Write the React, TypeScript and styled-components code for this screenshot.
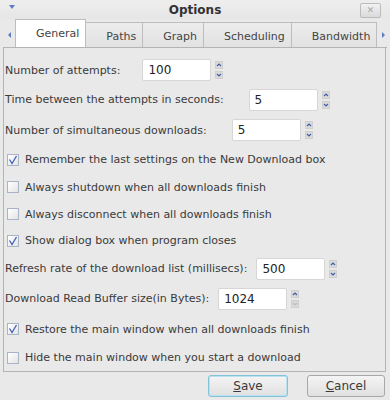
import React from 'react';
import styled, { createGlobalStyle } from 'styled-components';

const GlobalStyle = createGlobalStyle`
  html, body {
    margin: 0;
    padding: 0;
    background: #e9e9e9;
  }
  body {
    font-family: 'DejaVu Sans', 'Liberation Sans', sans-serif;
    font-size: 11px;
    color: #3a3a3a;
  }
`;

const Window = styled.div`
  width: 390px;
  height: 400px;
  display: flex;
  flex-direction: column;
  background: #e9e9e9;
  overflow: hidden;
`;

const TitleBar = styled.div`
  height: 19px;
  display: grid;
  grid-template-columns: 1fr auto 1fr;
  align-items: center;
  background: linear-gradient(#eeeeee, #e6e6e6);
`;

const MenuArrow = styled.div`
  justify-self: start;
  margin-left: 9px;
  margin-top: -5px;
  width: 0;
  height: 0;
  border-left: 3px solid transparent;
  border-right: 3px solid transparent;
  border-top: 4px solid #5a7dc0;
`;

const Title = styled.div`
  font-weight: bold;
  font-size: 12px;
  color: #333;
`;

const CloseButton = styled.div`
  justify-self: end;
  margin-right: 9px;
  margin-top: 1px;
  width: 19px;
  height: 13px;
  border: 1px solid #bcbcbc;
  border-radius: 2px;
  background: linear-gradient(#f2f2f2, #dadada);
  display: flex;
  align-items: center;
  justify-content: center;
  color: #a8a8a8;
  font-size: 9px;
  line-height: 1;
`;

const TabBar = styled.div`
  height: 28px;
  display: flex;
  align-items: flex-end;
  border-bottom: 1px solid #b4b4b4;
  margin: 0 3px;
`;

const ScrollArrow = styled.div<{ $dir: 'left' | 'right' }>`
  width: 12px;
  flex-shrink: 0;
  align-self: center;
  margin-top: 3px;
  display: flex;
  justify-content: center;
  &::before {
    content: '';
    width: 0;
    height: 0;
    border-top: 3px solid transparent;
    border-bottom: 3px solid transparent;
    ${({ $dir }) =>
      $dir === 'left' ? 'border-right: 3px solid #5a7dc0;' : 'border-left: 3px solid #5a7dc0;'}
  }
`;

const Tab = styled.div<{ $active?: boolean }>`
  flex-shrink: 0;
  height: ${({ $active }) => ($active ? '28px' : '25px')};
  box-sizing: border-box;
  display: flex;
  align-items: center;
  padding: ${({ $active }) => ($active ? '0 6px 0 20px' : '2px 6px 0 20px')};
  background: ${({ $active }) => ($active ? '#ffffff' : 'linear-gradient(#ececec, #e2e2e2)')};
  border: 1px solid #bdbdbd;
  border-bottom: none;
  border-left: ${({ $active }) => ($active ? '1px solid #bdbdbd' : 'none')};
  font-size: 11px;
  color: #444;
  white-space: nowrap;
`;

const Panel = styled.div`
  height: 324px;
  box-sizing: border-box;
  margin: 0 4px 0 3px;
  border: 1px solid #b4b4b4;
  border-top: none;
  padding: 8px 0 0 1px;
  display: flex;
  flex-direction: column;
`;

const Row = styled.div<{ $h: number }>`
  height: ${({ $h }) => $h}px;
  display: flex;
  align-items: center;
  white-space: nowrap;
`;

const Label = styled.span``;

const SpinField = styled.div<{ $gap: number }>`
  display: flex;
  align-items: center;
  gap: 4px;
  margin-left: ${({ $gap }) => $gap}px;
`;

const Input = styled.div`
  width: 69px;
  height: 22px;
  box-sizing: border-box;
  background: #ffffff;
  border: 1px solid #d6d6d6;
  border-radius: 2px;
  display: flex;
  align-items: center;
  padding-left: 5px;
  font-size: 12px;
  color: #222;
`;

const SpinButtons = styled.div`
  display: flex;
  flex-direction: column;
  gap: 2px;
`;

const SpinButton = styled.div<{ $disabled?: boolean }>`
  width: 8px;
  height: 8px;
  box-sizing: border-box;
  background: #dadada;
  border: 1px solid #cfcfcf;
  display: flex;
  align-items: center;
  justify-content: center;
  svg {
    display: block;
  }
  path {
    stroke: ${({ $disabled }) => ($disabled ? '#bdbdbd' : '#3d5fa8')};
  }
`;

const CheckRow = styled(Row)`
  padding-left: 2px;
  gap: 6px;
`;

const Box = styled.div`
  width: 12px;
  height: 12px;
  box-sizing: border-box;
  border: 1px solid #a9b4c4;
  background: linear-gradient(135deg, #ffffff, #e4e4e4);
  display: flex;
  align-items: center;
  justify-content: center;
`;

const ButtonRow = styled.div`
  display: flex;
  justify-content: flex-end;
  gap: 19px;
  padding: 3px 5px 0 0;
`;

const Button = styled.div<{ $focused?: boolean; $w: number }>`
  width: ${({ $w }) => $w}px;
  height: 22px;
  box-sizing: border-box;
  border: 1px solid ${({ $focused }) => ($focused ? '#7fc4d8' : '#a8a8a8')};
  box-shadow: ${({ $focused }) => ($focused ? 'inset 0 0 0 1px #b9e2ee' : 'none')};
  border-radius: 3px;
  background: linear-gradient(#f4f4f4, #e0e0e0);
  display: flex;
  align-items: center;
  justify-content: center;
  font-size: 12px;
  color: #3a3a3a;
  u {
    text-decoration: underline;
  }
`;

const Spin = ({ value, gap, downDisabled }: { value: string; gap: number; downDisabled?: boolean }) => (
  <SpinField $gap={gap}>
    <Input>{value}</Input>
    <SpinButtons>
      <SpinButton>
        <svg width="6" height="4" viewBox="0 0 6 4">
          <path d="M1 3 L3 1 L5 3" fill="none" strokeWidth="1.2" />
        </svg>
      </SpinButton>
      <SpinButton $disabled={downDisabled}>
        <svg width="6" height="4" viewBox="0 0 6 4">
          <path d="M1 1 L3 3 L5 1" fill="none" strokeWidth="1.2" />
        </svg>
      </SpinButton>
    </SpinButtons>
  </SpinField>
);

const Check = ({ checked, label, h }: { checked?: boolean; label: string; h: number }) => (
  <CheckRow $h={h}>
    <Box>
      {checked && (
        <svg width="10" height="10" viewBox="0 0 10 10">
          <path d="M1.5 4.5 L4 8.5 L8.5 1" fill="none" stroke="#3f62b8" strokeWidth="1.3" />
        </svg>
      )}
    </Box>
    <Label>{label}</Label>
  </CheckRow>
);

export default function App() {
  return (
    <Window>
      <GlobalStyle />
      <TitleBar>
        <MenuArrow />
        <Title>Options</Title>
        <CloseButton>✕</CloseButton>
      </TitleBar>
      <TabBar>
        <ScrollArrow $dir="left" />
        <Tab $active>General</Tab>
        <Tab>Paths</Tab>
        <Tab>Graph</Tab>
        <Tab>Scheduling</Tab>
        <Tab>Bandwidth</Tab>
        <ScrollArrow $dir="right" />
      </TabBar>
      <Panel>
        <Row $h={29}>
          <Label>Number of attempts:</Label>
          <Spin value="100" gap={22} />
        </Row>
        <Row $h={30}>
          <Label>Time between the attempts in seconds:</Label>
          <Spin value="5" gap={25} />
        </Row>
        <Row $h={31}>
          <Label>Number of simultaneous downloads:</Label>
          <Spin value="5" gap={25} />
        </Row>
        <Check h={28} checked label="Remember the last settings on the New Download box" />
        <Check h={27} label="Always shutdown when all downloads finish" />
        <Check h={27} label="Always disconnect when all downloads finish" />
        <Check h={27} checked label="Show dialog box when program closes" />
        <Row $h={29}>
          <Label>Refresh rate of the download list (millisecs):</Label>
          <Spin value="500" gap={9} />
        </Row>
        <Row $h={31}>
          <Label>Download Read Buffer size(in Bytes):</Label>
          <Spin value="1024" gap={9} downDisabled />
        </Row>
        <Check h={30} checked label="Restore the main window when all downloads finish" />
        <Check h={27} label="Hide the main window when you start a download" />
      </Panel>
      <ButtonRow>
        <Button $focused $w={80}>
          <u>S</u>ave
        </Button>
        <Button $w={78}>
          <u>C</u>ancel
        </Button>
      </ButtonRow>
    </Window>
  );
}
